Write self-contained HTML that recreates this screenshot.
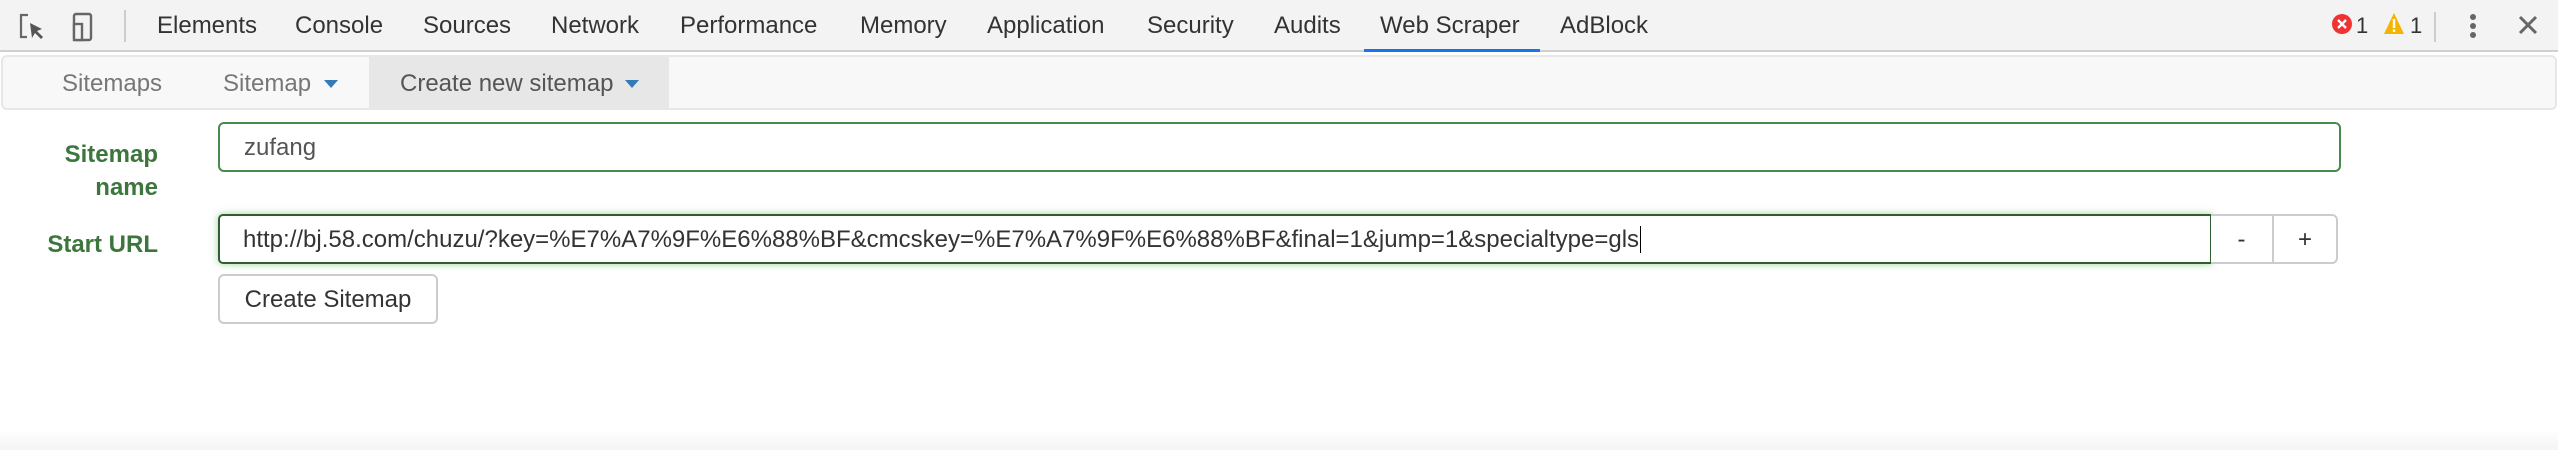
<!DOCTYPE html>
<html><head><meta charset="utf-8"><style>
*{margin:0;padding:0;box-sizing:border-box}
body{width:2558px;height:450px;background:#fff;font-family:"Liberation Sans",Arial,sans-serif;position:relative;overflow:hidden;color:#333}
.a{position:absolute;white-space:nowrap}
#tb{position:absolute;left:0;top:0;width:2558px;height:52px;background:#f3f3f3;border-bottom:2px solid #d0d0d0}
.tab{position:absolute;top:12px;font-size:24px;color:#333;line-height:28px}
#sub{position:absolute;left:1px;top:55px;width:2556px;height:55px;background:#f8f8f8;border:2px solid #e7e7e7;border-radius:6px}
.nav{position:absolute;top:70px;font-size:24px;color:#777;line-height:28px}
.car{position:absolute;top:80px;width:0;height:0;border-left:7px solid transparent;border-right:7px solid transparent;border-top:8px solid #337ab7}
.lab{position:absolute;font-size:24px;font-weight:bold;color:#3c763d;text-align:right;right:2400px;line-height:28px}
.inp{position:absolute;background:#fff;font-size:24px;color:#555;line-height:28px}
</style></head><body>
<div id="tb"></div>
<svg class="a" style="left:18px;top:12px" width="90" height="30" viewBox="0 0 90 30">
<path d="M10 3H3v22h6" fill="none" stroke="#666" stroke-width="2.2"/>
<path d="M12 11l2 15 3-5 6 6 2-2-6-6 5-2z" fill="#555"/>
<rect x="56" y="2" width="17" height="26" rx="2" fill="none" stroke="#666" stroke-width="2.4"/>
<rect x="56" y="12" width="8" height="16" fill="#f3f3f3" stroke="#666" stroke-width="2.4"/>
</svg>
<div class="a" style="left:124px;top:10px;width:2px;height:32px;background:#ccc"></div>
<div class="tab" style="left:157px">Elements</div>
<div class="tab" style="left:295px">Console</div>
<div class="tab" style="left:423px">Sources</div>
<div class="tab" style="left:551px">Network</div>
<div class="tab" style="left:680px">Performance</div>
<div class="tab" style="left:860px">Memory</div>
<div class="tab" style="left:987px">Application</div>
<div class="tab" style="left:1147px">Security</div>
<div class="tab" style="left:1274px">Audits</div>
<div class="tab" style="left:1380px">Web Scraper</div>
<div class="tab" style="left:1560px">AdBlock</div>
<div class="a" style="left:1364px;top:49px;width:176px;height:3px;background:#1a73e8"></div>
<svg class="a" style="left:2330px;top:12px" width="228" height="30" viewBox="0 0 228 30">
<circle cx="12" cy="12" r="10" fill="#e33"/>
<path d="M8 8l8 8M16 8l-8 8" stroke="#fff" stroke-width="2.4"/>
<text x="26" y="21" font-size="22" fill="#333" font-family="Liberation Sans">1</text>
<path d="M64 1L74 22H54z" fill="#f4b400"/>
<rect x="62.8" y="7" width="2.4" height="9" fill="#fff"/><rect x="62.8" y="17.5" width="2.4" height="2.4" fill="#fff"/>
<text x="80" y="21" font-size="22" fill="#333" font-family="Liberation Sans">1</text>
<rect x="104" y="-2" width="2" height="32" fill="#ccc"/>
<circle cx="143" cy="5" r="3" fill="#666"/><circle cx="143" cy="14" r="3" fill="#666"/><circle cx="143" cy="23" r="3" fill="#666"/>
<path d="M190 5l16 16M206 5l-16 16" stroke="#666" stroke-width="3"/>
</svg>
<div id="sub"></div>
<div class="a" style="left:369px;top:57px;width:300px;height:51px;background:#e7e7e7"></div>
<div class="nav" style="left:62px">Sitemaps</div>
<div class="nav" style="left:223px">Sitemap</div>
<div class="car" style="left:324px"></div>
<div class="nav" style="left:400px;color:#555">Create new sitemap</div>
<div class="car" style="left:625px"></div>
<div class="lab" style="top:141px">Sitemap</div>
<div class="lab" style="top:174px">name</div>
<div class="lab" style="top:231px">Start URL</div>
<div class="inp" style="left:218px;top:122px;width:2123px;height:50px;border:2px solid #4a8a4a;border-radius:6px;padding:10px 0 0 24px">zufang</div>
<div class="inp" style="left:218px;top:214px;width:1994px;height:50px;border:2px solid #2f5f30;box-shadow:0 0 8px rgba(103,177,104,.6);border-radius:5px 0 0 5px;padding:10px 0 0 23px;color:#333">http://bj.58.com/chuzu/?key=%E7%A7%9F%E6%88%BF&amp;cmcskey=%E7%A7%9F%E6%88%BF&amp;final=1&amp;jump=1&amp;specialtype=gls<span style="border-left:1.5px solid #000;margin-left:1px"></span></div>
<div class="inp" style="left:2211px;top:214px;width:63px;height:50px;border:2px solid #ccc;border-left:none;text-align:center;padding-top:10px;color:#333">-</div>
<div class="inp" style="left:2272px;top:214px;width:66px;height:50px;border:2px solid #ccc;border-radius:0 6px 6px 0;text-align:center;padding-top:10px;color:#333">+</div>
<div class="inp" style="left:218px;top:274px;width:220px;height:50px;border:2px solid #ccc;border-radius:6px;text-align:center;padding-top:10px;color:#333">Create Sitemap</div>
<div class="a" style="left:0;top:430px;width:2558px;height:20px;background:linear-gradient(#fff,#f4f4f4)"></div>
</body></html>
